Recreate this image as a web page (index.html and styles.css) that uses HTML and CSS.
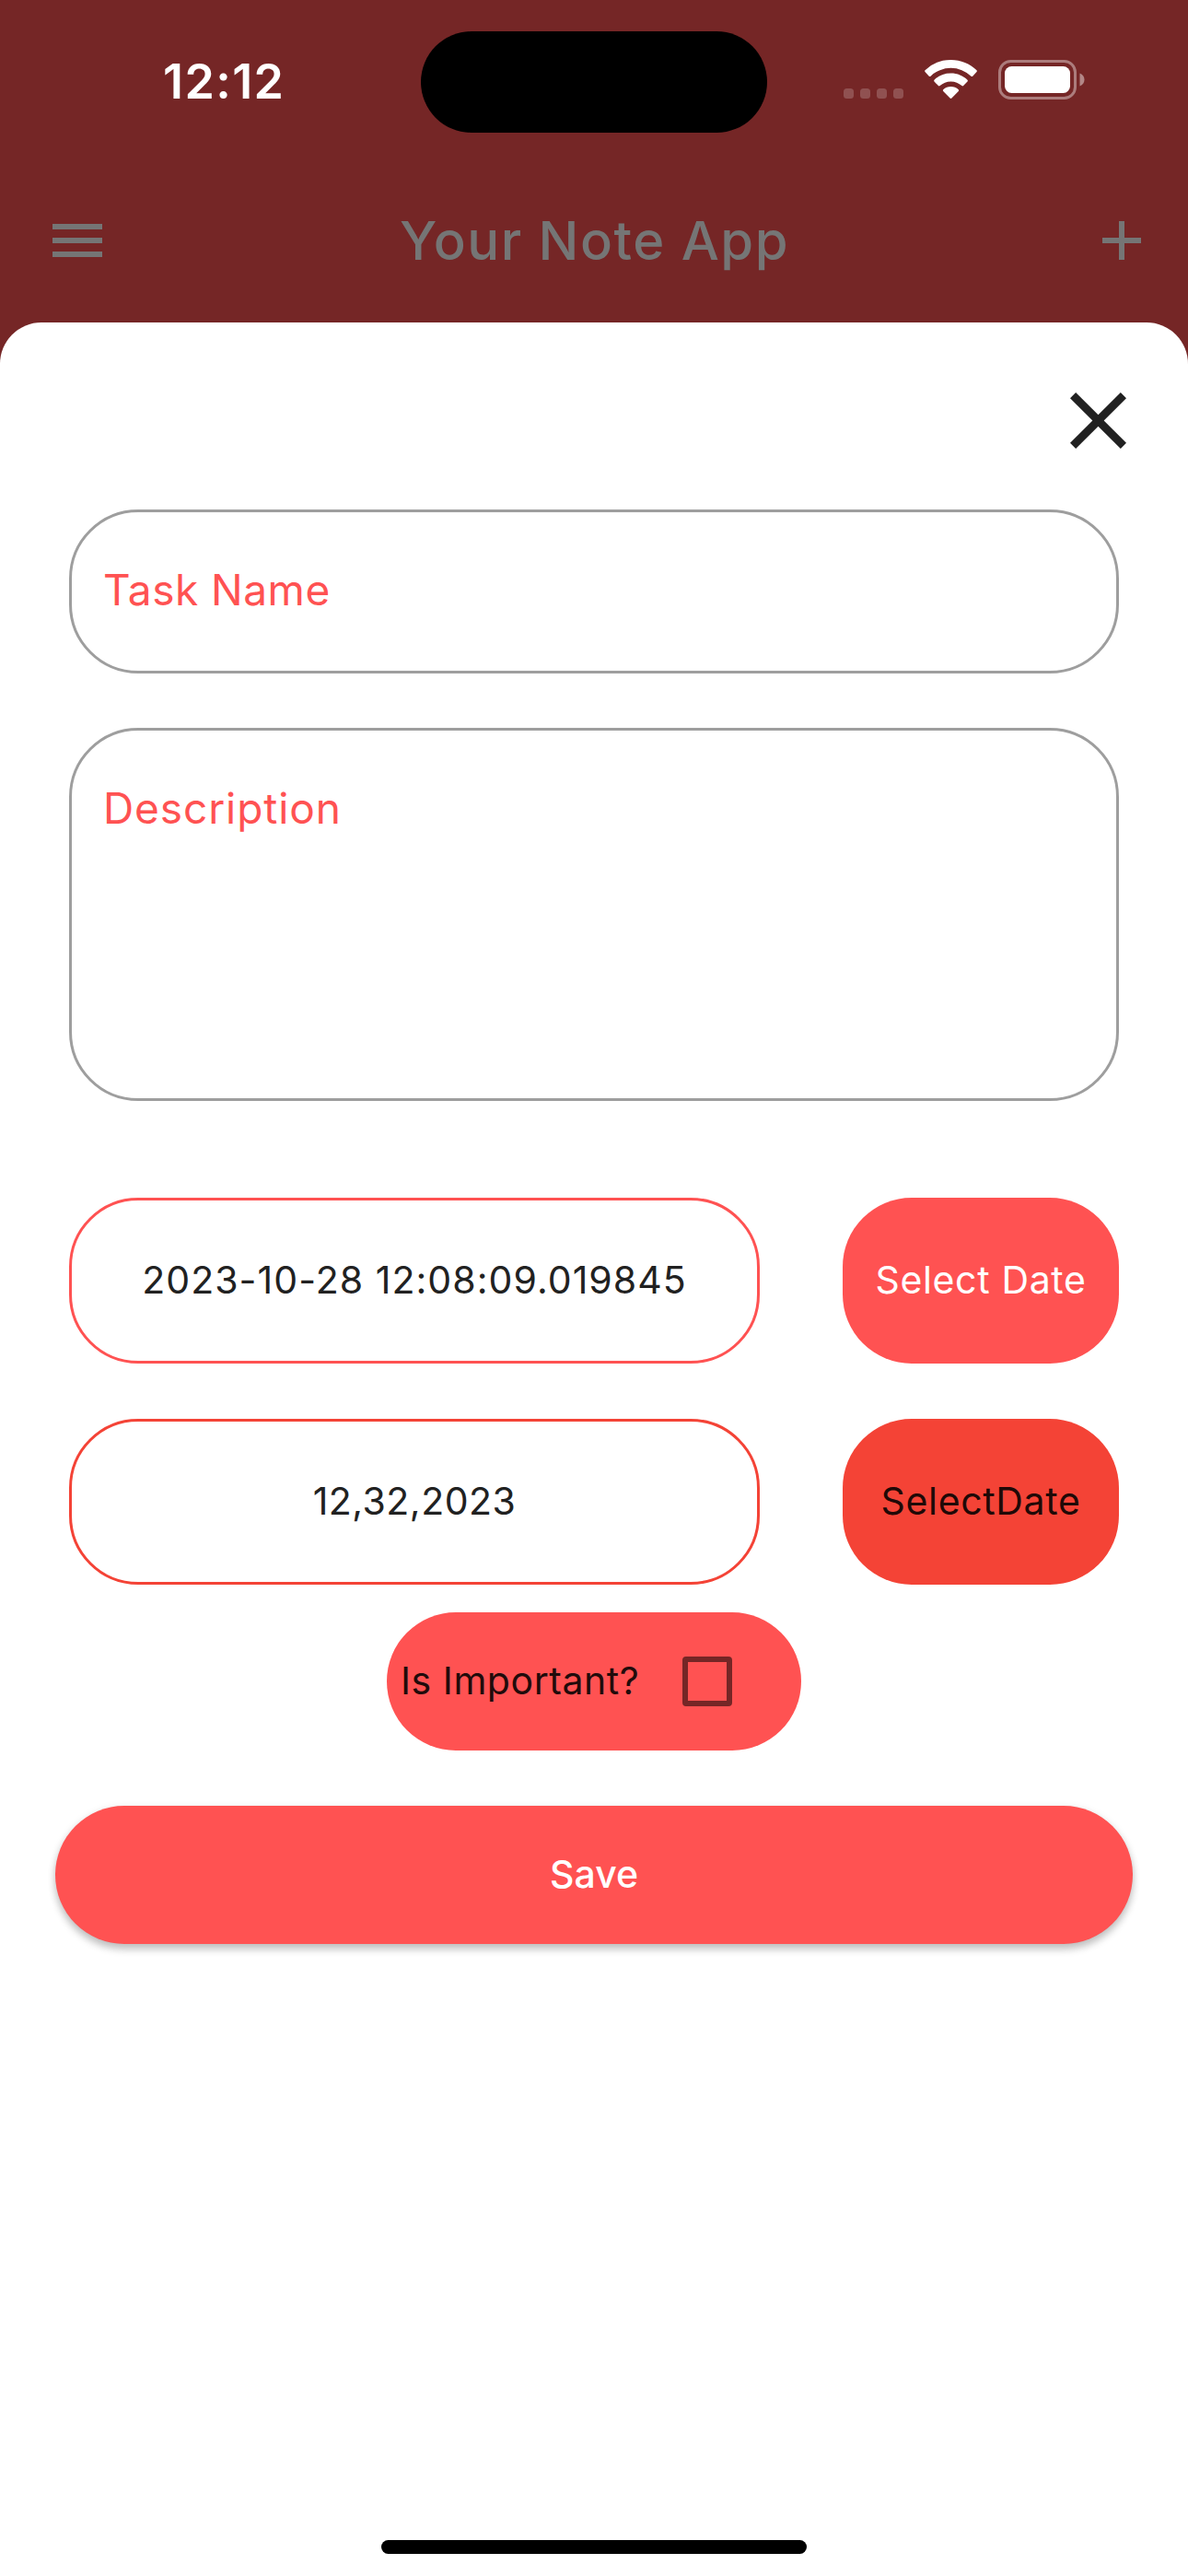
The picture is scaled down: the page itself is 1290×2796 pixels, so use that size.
FILE: index.html
```html
<!DOCTYPE html>
<html lang="en">
<head>
<meta charset="utf-8">
<title>Your Note App</title>
<link rel="stylesheet" href="styles.css">
</head>
<body>
<div class="screen">
  <header class="status-bar">
    <span class="clock">12:12</span>
    <div class="island"></div>
    <div class="status-icons">
      <svg width="66" height="52" viewBox="916 60 66 52" fill="#fff" fill-opacity=".2"><rect x="916" y="96" width="11" height="11" rx="3.5"/><rect x="934" y="96" width="11" height="11" rx="3.5"/><rect x="952" y="96" width="11" height="11" rx="3.5"/><rect x="970" y="96" width="11" height="11" rx="3.5"/></svg>
      <svg class="wifi" width="58" height="52" viewBox="1003 60 58 52" fill="#fff"><path d="M1032.500 65c10.800 0 20.700 4.200 28 11.200.5.500.5 1.200 0 1.700l-4.300 4.800c-.5.500-1.200.500-1.700 0a31.800 31.800 0 0 0-44 0c-.5.500-1.200.500-1.700 0l-4.300-4.800c-.5-.5-.5-1.200 0-1.700a40.300 40.300 0 0 1 28-11.200z"/><path d="M1032.500 79.500c7 0 13.300 2.700 18 7.200.5.500.5 1.200 0 1.700l-4.400 4.700c-.5.500-1.200.500-1.700 0a17.400 17.400 0 0 0-23.800 0c-.5.500-1.200.500-1.700 0l-4.400-4.700c-.5-.5-.5-1.200 0-1.700a26 26 0 0 1 18-7.200z"/><path d="M1032.500 94c3.200 0 6.100 1.200 8.300 3.200.5.500.5 1.200 0 1.700l-7.400 7.700c-.5.500-1.300.5-1.800 0l-7.400-7.700c-.5-.5-.5-1.200 0-1.700a12.300 12.300 0 0 1 8.300-3.200z"/></svg>
      <svg width="96" height="52" viewBox="1083 60 96 52"><rect x="1085.500" y="66.500" width="82" height="40" rx="12" fill="none" stroke="#fff" stroke-opacity=".4" stroke-width="3"/><rect x="1091" y="72" width="71" height="29" rx="7.500" fill="#fff"/><path d="M1172.500 79.500c3.200 1.300 5 4 5 7s-1.800 5.700-5 7z" fill="#fff" fill-opacity=".45"/></svg>
    </div>
  </header>
  <nav class="app-bar">
    <svg width="54" height="36" viewBox="0 0 54 36" fill="#757575"><path d="M0 0h54v6H0zM0 15h54v6H0zM0 30h54v6H0z"/></svg>
    <h1 class="title"><span class="t-title">Your Note App</span></h1>
    <svg width="42" height="42" viewBox="0 0 42 42" fill="#757575"><path d="M18 0h6v18h18v6H24v18h-6V24H0v-6h18z"/></svg>
  </nav>
  <main class="sheet">
    <button class="close" aria-label="Close"><svg width="61" height="61" viewBox="5 5 14 14" fill="#212121"><path d="M19 6.410L17.590 5 12 10.590 6.410 5 5 6.410 10.590 12 5 17.590 6.410 19 12 13.410 17.590 19 19 17.590 13.410 12z"/></svg></button>
    <div class="field name"><span class="t-name">Task Name</span></div>
    <div class="field description"><span class="t-desc">Description</span></div>
    <div class="date-row accent">
      <div class="value"><span class="t-stamp">2023-10-28 12:08:09.019845</span></div>
      <button class="pick"><span class="t-pick">Select Date</span></button>
    </div>
    <div class="date-row plain">
      <div class="value"><span class="t-day">12,32,2023</span></div>
      <button class="pick"><span class="t-pick">SelectDate</span></button>
    </div>
    <label class="important"><span class="t-imp">Is Important?</span><span class="box"></span></label>
    <button class="save"><span class="t-save">Save</span></button>
    <div class="home"></div>
  </main>
</div>
</body>
</html>
```
FILE: styles.css
```css
* { box-sizing: border-box; }
body { margin: 0; font-family: Inter, "Liberation Sans", sans-serif; }
button { border: 0; padding: 0; font: inherit; background: none; }
svg { display: block; }
span { white-space: nowrap; }
.screen { width: 1290px; height: 2796px; background: #752626; display: flex; flex-direction: column; overflow: hidden; }

.status-bar { height: 177px; flex: none; display: grid; grid-template-columns: 457px 376px 457px; align-items: start; }
.clock { padding: 57px 0 0 177px; font-size: 52px; line-height: 64px; font-weight: 600; letter-spacing: 1.4px; color: #fff; }
.island { height: 110px; margin-top: 34px; border-radius: 55px; background: #000; }
.status-icons { display: flex; padding: 60px 0 0 83px; }
.wifi { margin: 0 22px 0 21px; }

.app-bar { height: 173px; flex: none; display: flex; align-items: center; justify-content: space-between; padding: 0 51px 5px 57px; }
.title { margin: 0; padding-right: 17px; font-size: 58px; line-height: 70px; font-weight: 450; color: #757575; }

.sheet { flex: 1; background: #fff; border-radius: 45px 45px 0 0; padding: 76px 75px 24px; display: flex; flex-direction: column; }
.close { align-self: flex-end; margin-right: -8px; height: 61px; }
.field { border: 3px solid #9e9e9e; border-radius: 75px; color: #ff5252; font-size: 46px; line-height: 56px; padding: 56px 34px; }
.name { height: 178px; margin-top: 66px; }
.description { height: 405px; margin-top: 59px; }
.date-row { display: grid; grid-template-columns: 750px 300px; justify-content: space-between; height: 180px; font-size: 41px; line-height: 50px; }
.accent { margin-top: 105px; --tone: #ff5252; --label: #fff; }
.plain { margin-top: 60px; --tone: #f44336; --label: #200907; }
.value, .pick { display: flex; align-items: center; justify-content: center; border-radius: 75px; padding-bottom: 3px; }
.value { border: 3px solid var(--tone); color: #212121; }
.pick { background: var(--tone); color: var(--label); }
.important { align-self: center; width: 450px; height: 150px; margin-top: 30px; border-radius: 75px; background: #ff5252; display: flex; align-items: center; justify-content: space-between; padding: 0 75px 0 15px; font-size: 41px; line-height: 50px; color: #210b0b; }
.t-imp { padding-bottom: 3px; }
.box { width: 54px; height: 54px; border: 6px solid #752626; border-radius: 4px; }
.save { margin: 60px -15px 0; height: 150px; flex: none; border-radius: 75px; background: #ff5252; color: #fff; font-size: 41px; line-height: 50px; font-weight: 500; box-shadow: 0 6px 8px rgba(0,0,0,.2), 0 2px 10px rgba(0,0,0,.1); padding-bottom: 3px; }
.home { width: 462px; height: 15px; margin: auto auto 0; border-radius: 8px; background: #000; }

.t-title { letter-spacing: 1.5px; }
.t-name { letter-spacing: .5px; }
.t-desc { letter-spacing: .9px; }
.t-stamp { letter-spacing: 1.05px; }
.t-day { letter-spacing: .5px; }
.t-pick { letter-spacing: .65px; }
.t-imp { letter-spacing: .55px; }
```
